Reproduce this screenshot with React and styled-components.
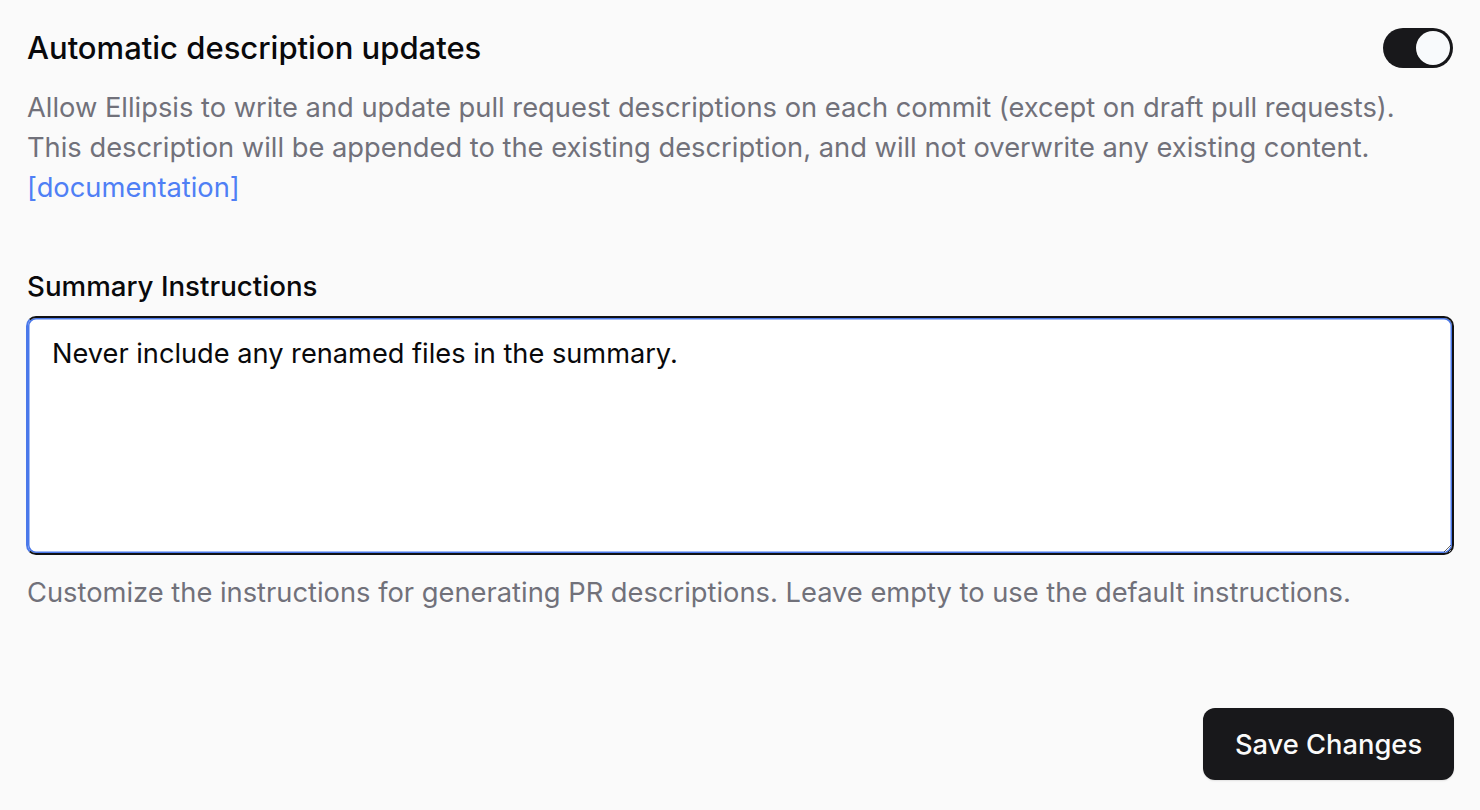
import React, { useState } from "react";
import styled, { createGlobalStyle } from "styled-components";

const Global = createGlobalStyle`
  html, body { margin: 0; padding: 0; background: #fafafa; }
  body { font-family: Inter, "Noto Sans", sans-serif; -webkit-font-smoothing: antialiased; }
  * { box-sizing: border-box; }
`;

const Page = styled.div`
  width: 1480px;
  height: 810px;
  padding: 26px 26px 0 27px;
  display: flex;
  flex-direction: column;
  background: #fafafa;
`;

const HeaderRow = styled.div`
  display: flex;
  justify-content: space-between;
  align-items: center;
  height: 44px;
`;

const Title = styled.h2`
  margin: 0;
  font-size: 31px;
  line-height: 44px;
  font-weight: 500;
  color: #09090b;
`;

const Toggle = styled.button`
  width: 70px;
  height: 40px;
  border-radius: 20px;
  border: none;
  background: #18181b;
  padding: 3px;
  display: flex;
  justify-content: ${(p) => (p.$on ? "flex-end" : "flex-start")};
  align-items: center;
  cursor: pointer;
  margin-right: 1px;
`;

const Knob = styled.span`
  width: 34px;
  height: 34px;
  border-radius: 50%;
  background: #f8fafc;
  box-shadow: 0 1px 3px rgba(0,0,0,0.2);
`;

const Description = styled.p`
  margin: 18px 0 0;
  font-size: 27.3px;
  line-height: 40px;
  color: #71717a;
`;

const DocLink = styled.a`
  color: #4f7ff5;
  text-decoration: none;
`;

const Label = styled.label`
  margin-top: 58px;
  font-size: 27.7px;
  font-weight: 500;
  line-height: 40px;
  color: #09090b;
`;

const TextArea = styled.textarea`
  margin-top: 10px;
  margin-left: -1px;
  width: 1428px;
  height: 239px;
  border-radius: 10px;
  border: 2px solid #111113;
  border-left-color: #4a78ea;
  box-shadow: inset 0 0 0 1.5px #4a78ea;
  background: #ffffff;
  padding: 17px 24px;
  font-family: Inter, "Noto Sans", sans-serif;
  font-size: 27.2px;
  line-height: 38px;
  color: #09090b;
  outline: none;
  resize: vertical;
`;

const Helper = styled.p`
  margin: 18px 0 0;
  font-size: 27.3px;
  line-height: 40px;
  color: #71717a;
`;

const Footer = styled.div`
  display: flex;
  justify-content: flex-end;
  margin-top: 95px;
`;

const SaveButton = styled.button`
  width: 251px;
  height: 72px;
  border-radius: 12px;
  border: none;
  background: #18181b;
  color: #fafafa;
  font-family: Inter, "Noto Sans", sans-serif;
  font-size: 27.3px;
  font-weight: 500;
  cursor: pointer;
  box-shadow: 0 1px 2px rgba(0,0,0,0.1);
`;

export default function App() {
  const [on, setOn] = useState(true);
  const [text, setText] = useState("Never include any renamed files in the summary.");
  return (
    <Page>
      <Global />
      <HeaderRow>
        <Title>Automatic description updates</Title>
        <Toggle $on={on} onClick={() => setOn(!on)} aria-label="toggle">
          <Knob />
        </Toggle>
      </HeaderRow>
      <Description>
        Allow Ellipsis to write and update pull request descriptions on each commit (except on draft pull requests).
        <br />
        This description will be appended to the existing description, and will not overwrite any existing content.
        <br />
        <DocLink href="#">[documentation]</DocLink>
      </Description>
      <Label>Summary Instructions</Label>
      <TextArea value={text} onChange={(e) => setText(e.target.value)} />
      <Helper>
        Customize the instructions for generating PR descriptions. Leave empty to use the default instructions.
      </Helper>
      <Footer>
        <SaveButton>Save Changes</SaveButton>
      </Footer>
    </Page>
  );
}
